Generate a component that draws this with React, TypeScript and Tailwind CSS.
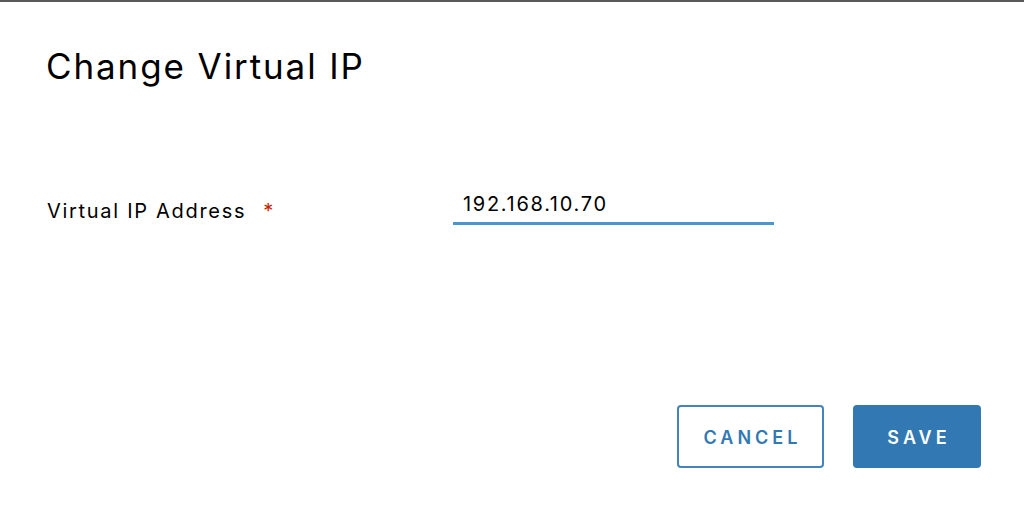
export default function App() {
  return (
    <div className="flex h-[512px] w-[1024px] flex-col border-t-2 border-[#595959] bg-white font-['Inter',sans-serif] text-black">
      <h1 className="pl-[46px] pt-[44px] text-[35px] leading-[40px] font-normal tracking-[1.9px]">
        Change Virtual IP
      </h1>

      <div className="mt-[100px] flex items-start">
        <label className="flex w-[453px] shrink-0 pl-[47px] pt-[13px] text-[20px] leading-[24px] tracking-[1.7px]">
          Virtual IP Address
          <span className="ml-[17px] text-[#c92100]">*</span>
        </label>
        <div className="h-[39px] w-[321px] border-b-[3px] border-[#4a97d0] pl-[10px] pt-[6px] text-[20px] leading-[24px] tracking-[1.7px]">
          192.168.10.70
        </div>
      </div>

      <div className="mt-auto flex justify-end gap-[29px] pb-[44px] pr-[43px]">
        <button className="h-[63px] w-[147px] rounded-[4px] border-2 border-[#4384bd] bg-white pl-[4px] pt-[2px] text-[18px] font-semibold tracking-[4px] text-[#3278b3]">
          CANCEL
        </button>
        <button className="h-[63px] w-[128px] rounded-[4px] bg-[#3278b3] pl-[4px] pt-[2px] text-[18px] font-semibold tracking-[4px] text-white">
          SAVE
        </button>
      </div>
    </div>
  );
}
